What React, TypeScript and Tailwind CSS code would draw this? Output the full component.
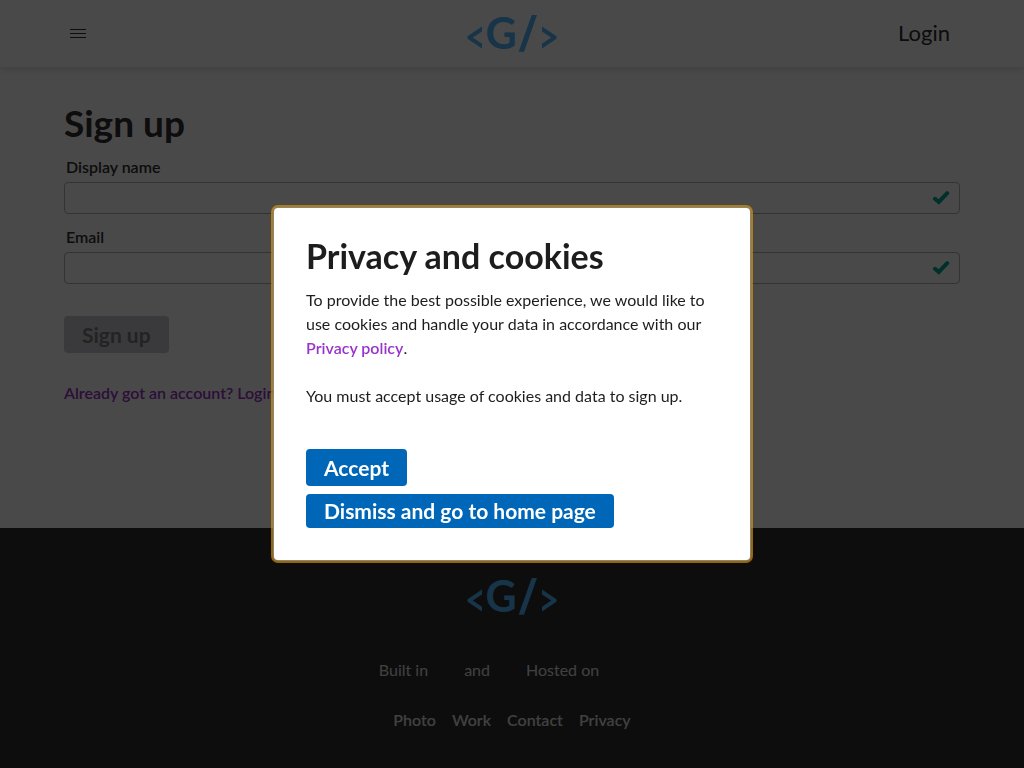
function Logo() {
  return (
    <svg width="90" height="56" viewBox="0 -8 90 56" fill="#50b4fa" role="img" aria-label="<G/>">
      <path d="M.5 22.3 15 12.5V17.4L5.8 23.5 15 29.8v4.8L.5 24.8Z" />
      <text x="18.5" y="35" fontFamily="Lato, sans-serif" fontWeight="700" fontSize="43">
        G
      </text>
      <path d="M64.7 1H70L57 37.7h-5.3Z" />
      <path d="M75 12.5l14.5 9.8v2.5L75 34.6v-4.8l9.2-6.3L75 17.4Z" />
    </svg>
  );
}

function Field({ id, label, type }: { id: string; label: string; type: string }) {
  return (
    <div>
      <label htmlFor={id} className="mb-[3px] ml-0.5 block font-semibold">
        {label}
      </label>
      <div className="relative">
        <input
          id={id}
          type={type}
          className="block h-8 w-full rounded border border-[#b3b3b3] bg-transparent pr-10 pl-2"
        />
        <svg
          className="absolute top-2 right-2.5"
          width="18"
          height="16"
          viewBox="0 0 18 16"
          fill="none"
          stroke="#00a890"
          strokeWidth="4"
          strokeLinecap="round"
          strokeLinejoin="miter"
          aria-hidden="true"
        >
          <path d="M3 8.8 6.8 12 15.2 3.2" />
        </svg>
      </div>
    </div>
  );
}

const footerLinks = ["Photo", "Work", "Contact", "Privacy"];

export default function App() {
  return (
    <div className="flex min-h-screen flex-col bg-white font-['Lato',sans-serif] text-[16px] leading-6 text-[#2d2d2d]">
      <header className="grid h-[67px] grid-cols-[1fr_auto_1fr] items-center px-16 shadow-[0_2px_8px_rgba(0,0,0,0.15)]">
        <button
          type="button"
          aria-label="Menu"
          className="flex flex-col gap-[3px] justify-self-start p-1.5"
        >
          <span className="h-px w-4 bg-[#2d2d2d]" />
          <span className="h-px w-4 bg-[#2d2d2d]" />
          <span className="h-px w-4 bg-[#2d2d2d]" />
        </button>
        <a href="#home">
          <Logo />
        </a>
        <a href="#login" className="mr-2.5 mb-0.5 justify-self-end text-[22px] leading-8">
          Login
        </a>
      </header>

      <main className="flex-1 px-16 pt-8">
        <h1 className="text-[37px] leading-[48px] font-bold">Sign up</h1>
        <form className="flex flex-col items-stretch pt-2">
          <div className="flex flex-col gap-[11px]">
            <Field id="name" label="Display name" type="text" />
            <Field id="email" label="Email" type="email" />
          </div>
          <button
            type="button"
            disabled
            className="mt-8 h-[37px] self-start rounded bg-[#cbcbd2] px-[18px] text-[21px] font-bold text-[#7a7a7a]"
          >
            Sign up
          </button>
        </form>
        <a href="#login" className="mt-7 inline-block font-semibold text-[#9933cc]">
          Already got an account? Login
        </a>
      </main>

      <footer className="flex h-60 flex-col items-center bg-[#2d2d2d] pt-[41px] text-[#e0e0e0]">
        <Logo />
        <p className="mt-[33px] flex gap-9 pr-[46px]">
          <span>Built in</span>
          <span>and</span>
          <span>Hosted on</span>
        </p>
        <nav className="mt-[26px] flex gap-4 font-semibold">
          {footerLinks.map((name) => (
            <a key={name} href={`#${name.toLowerCase()}`}>
              {name}
            </a>
          ))}
        </nav>
      </footer>

      <div className="fixed inset-0 flex items-center justify-center bg-[rgba(0,0,0,0.714)]">
        <div
          role="dialog"
          aria-modal="true"
          aria-labelledby="privacy-title"
          className="w-[476px] max-w-full rounded bg-white p-8 text-[#1d1d1d] shadow-[0_0_0_1px_#858585,0_0_0_3px_rgba(229,151,0,0.65)]"
        >
          <h2 id="privacy-title" className="text-[34px] leading-8 font-bold">
            Privacy and cookies
          </h2>
          <p className="mt-4">
            To provide the best possible experience, we would like to use cookies and handle your
            data in accordance with our{" "}
            <a href="#privacy" className="font-semibold text-[#9933cc]">
              Privacy policy
            </a>
            .
          </p>
          <p className="mt-6">You must accept usage of cookies and data to sign up.</p>
          <div className="mt-[41px] flex flex-col items-start gap-2 text-[21px] font-bold text-white">
            <button type="button" className="h-[37px] rounded bg-[#0067b8] px-[18px]">
              Accept
            </button>
            <a href="#home" className="rounded bg-[#0067b8] px-[18px] leading-[34px]">
              Dismiss and go to home page
            </a>
          </div>
        </div>
      </div>
    </div>
  );
}
